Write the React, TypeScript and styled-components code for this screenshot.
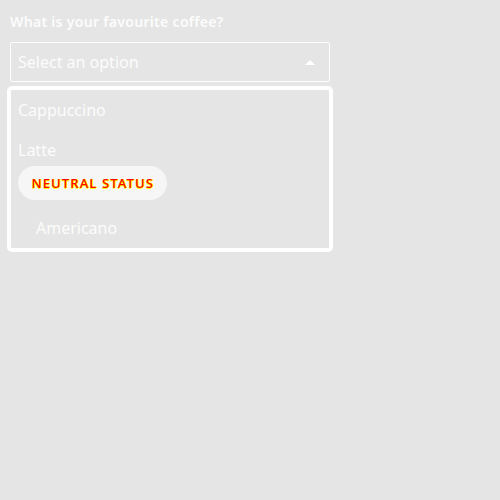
import React from "react";
import styled, { createGlobalStyle } from "styled-components";

const GlobalStyle = createGlobalStyle`
  * { box-sizing: border-box; }
  body {
    margin: 0;
    background: #e5e5e5;
    color: #fcfcfc;
    font-family: "Noto Sans", sans-serif;
  }
`;

const Field = styled.main`
  width: 340px;
  padding: 10px 7px;
`;

const Label = styled.label`
  display: block;
  margin: 0 3px 8px;
  font-size: 14px;
  font-weight: 600;
  line-height: 24px;
  letter-spacing: 0.31px;
`;

const Select = styled.div`
  display: flex;
  align-items: center;
  justify-content: space-between;
  width: 320px;
  height: 40px;
  margin: 0 3px 4px;
  padding: 0 14px 0 7px;
  border: 1px solid #ffffff;
  border-radius: 2px;
  font-size: 16px;
  line-height: 24px;
`;

const Arrow = styled.svg`
  display: block;
  width: 10px;
  height: 5px;
  fill: #ffffff;
`;

const List = styled.div`
  width: 326px;
  height: 166px;
  border: 4px solid #ffffff;
  border-radius: 5px;
`;

const Option = styled.div<{ $indent?: boolean }>`
  height: 40px;
  padding: 8px ${(p) => (p.$indent ? 25 : 7)}px;
  font-size: 16px;
  line-height: 24px;
`;

const Status = styled.span`
  display: flex;
  align-items: center;
  width: 149px;
  height: 34px;
  margin: -4px 0 8px 7px;
  padding-left: 13.5px;
  border-radius: 17px;
  background: #f6f6f6;
  color: #ff0000;
  font-size: 13px;
  font-weight: 500;
  letter-spacing: 1.14px;
  text-shadow: 1px 0 0 #ffff00, 0 1px 0 #ffff00, 1px 0 0 #ffff00;
  white-space: nowrap;
`;

export default function App() {
  return (
    <>
      <GlobalStyle />
      <Field>
        <Label>What is your favourite coffee?</Label>
        <Select role="combobox" aria-expanded="true">
          <span>Select an option</span>
          <Arrow viewBox="0 0 10 5"><path d="M0 5 5 0l5 5Z" /></Arrow>
        </Select>
        <List role="listbox">
          <Option role="option">Cappuccino</Option>
          <Option role="option">Latte</Option>
          <div role="group">
            <Status>NEUTRAL STATUS</Status>
            <Option role="option" $indent>Americano</Option>
          </div>
        </List>
      </Field>
    </>
  );
}
